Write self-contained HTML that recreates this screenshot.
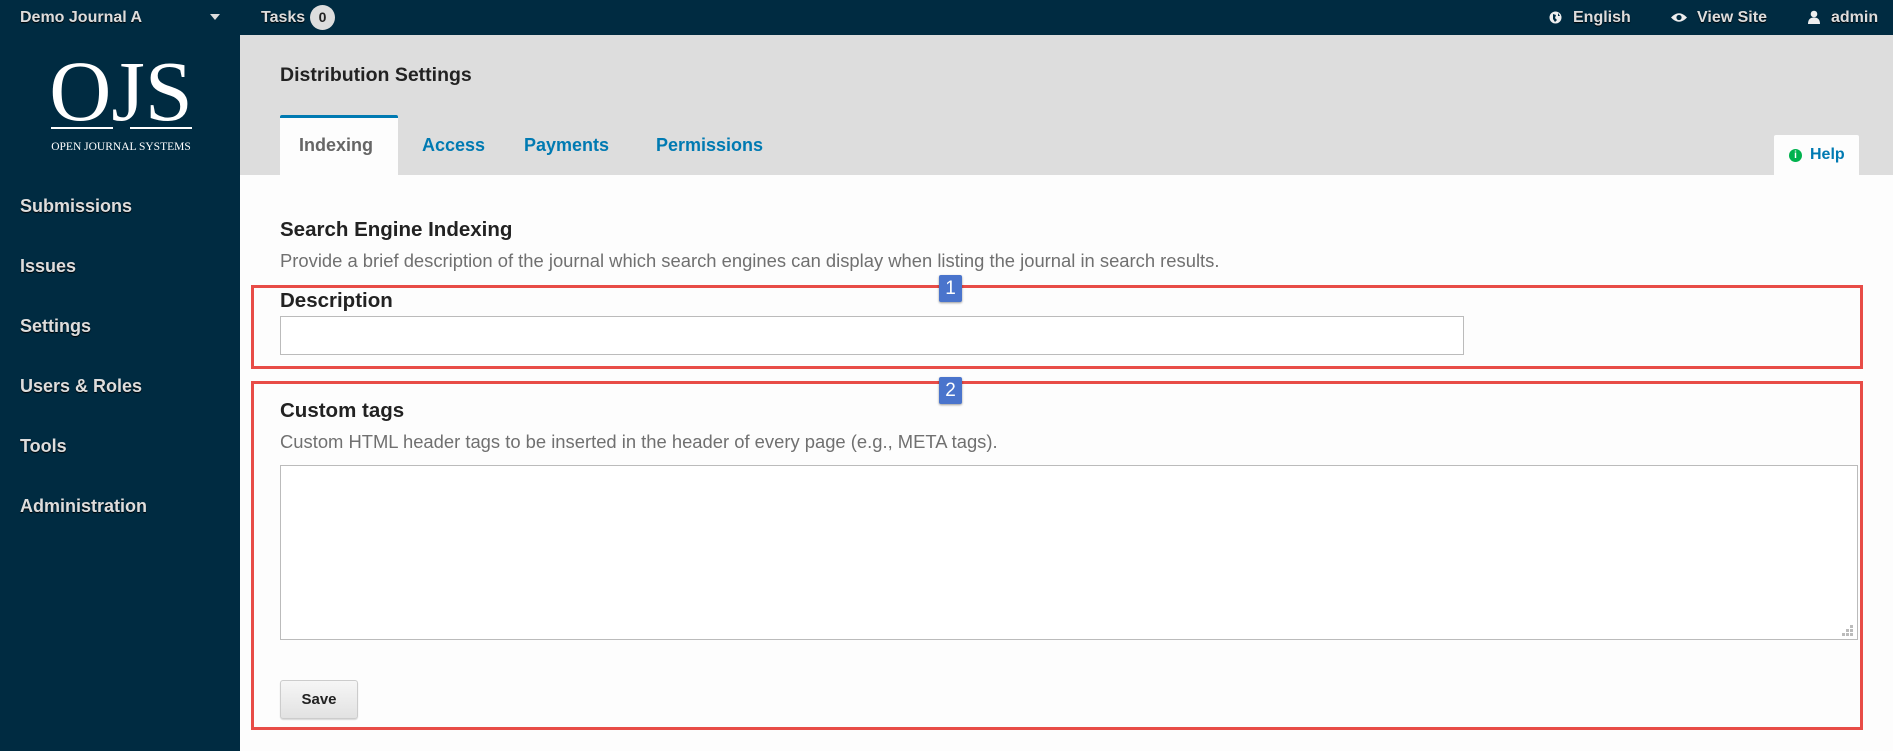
<!DOCTYPE html>
<html><head><meta charset="utf-8"><style>
*{margin:0;padding:0;box-sizing:border-box}
body{width:1893px;height:751px;background:#fdfdfd;font-family:"Liberation Sans",sans-serif;position:relative;overflow:hidden}
.a{position:absolute;white-space:nowrap}
#top{left:0;top:0;width:1893px;height:35px;background:#002b41}
.tb{color:#ddd;font-weight:bold;font-size:16px;text-shadow:0 1px 1px #000;line-height:35px;top:0}
#side{left:0;top:35px;width:240px;height:716px;background:#002b41}
.nav{color:#ddd;font-weight:bold;font-size:18px;text-shadow:0 1px 1px #000;left:20px;line-height:24px}
#hdr{left:240px;top:35px;width:1653px;height:140px;background:#ddd}
.tab{font-weight:bold;font-size:18px;color:#007ab2;line-height:24px;top:133px}
.red{border:3px solid #e84c47}
.badge{background:#4a74cc;color:#fff;font-size:19px;text-align:center;width:23px;height:27px;line-height:27px;border-radius:2px;box-shadow:0 1px 2px rgba(0,0,0,.4)}
h3{font-size:20.5px;color:#222}
.help{font-size:18.4px;color:#707070}
</style></head><body>
<div id="top" class="a"></div>
<div class="a tb" style="left:20px">Demo Journal A</div>
<div class="a" style="left:210px;top:14px;width:0;height:0;border-left:5px solid transparent;border-right:5px solid transparent;border-top:6px solid #ddd"></div>
<div class="a tb" style="left:261px">Tasks</div>
<div class="a" style="left:310px;top:5px;width:25px;height:25px;border-radius:50%;background:#ddd;color:#222;font-weight:bold;font-size:14px;text-align:center;line-height:25px">0</div>
<svg class="a" style="left:1549px;top:11px" width="13" height="13" viewBox="0 0 13 13"><circle cx="6.5" cy="6.5" r="6" fill="#eee"/><path d="M4 3l3 1-1 3 2 2-2 2-2-3zM9 2l2 3-2 0z" fill="#002b41"/></svg>
<div class="a tb" style="left:1573px">English</div>
<svg class="a" style="left:1671px;top:12px" width="16" height="11" viewBox="0 0 16 11"><path d="M0 5.5Q8-3 16 5.5Q8 14 0 5.5z" fill="#eee"/><circle cx="8" cy="5.5" r="2.6" fill="#002b41"/></svg>
<div class="a tb" style="left:1697px">View Site</div>
<svg class="a" style="left:1808px;top:10px" width="12" height="14" viewBox="0 0 12 14"><circle cx="6" cy="4" r="3.3" fill="#eee"/><path d="M0 14Q0 7.5 6 7.5Q12 7.5 12 14z" fill="#eee"/></svg>
<div class="a tb" style="left:1831px">admin</div>

<div id="side" class="a"></div>
<div class="a" style="left:40px;top:48px;width:162px;text-align:center;color:#fff;font-family:'Liberation Serif',serif;font-size:86px;line-height:86px;letter-spacing:0px">OJS</div>
<div class="a" style="left:51px;top:127px;width:62px;height:2px;background:#fff"></div>
<div class="a" style="left:130px;top:127px;width:62px;height:2px;background:#fff"></div>
<div class="a" style="left:46px;top:141px;width:150px;text-align:center;color:#fff;font-family:'Liberation Serif',serif;font-size:11.5px">OPEN JOURNAL SYSTEMS</div>
<div class="a nav" style="top:194px">Submissions</div>
<div class="a nav" style="top:254px">Issues</div>
<div class="a nav" style="top:314px">Settings</div>
<div class="a nav" style="top:374px">Users &amp; Roles</div>
<div class="a nav" style="top:434px">Tools</div>
<div class="a nav" style="top:494px">Administration</div>

<div id="hdr" class="a"></div>
<div class="a" style="left:280px;top:64px;font-size:19.5px;font-weight:bold;color:#222">Distribution Settings</div>
<div class="a" style="left:280px;top:115px;width:118px;height:60px;background:#fdfdfd;border-top:3px solid #007ab2;border-radius:2px 2px 0 0"></div>
<div class="a tab" style="left:299px;color:#666">Indexing</div>
<div class="a tab" style="left:422px">Access</div>
<div class="a tab" style="left:524px">Payments</div>
<div class="a tab" style="left:656px">Permissions</div>
<div class="a" style="left:1774px;top:135px;width:85px;height:40px;background:#fdfdfd;border-radius:2px 2px 0 0"></div>
<div class="a" style="left:1789px;top:149px;width:13px;height:13px;border-radius:50%;background:#00b24e;color:#fff;font-size:10px;font-weight:bold;text-align:center;line-height:13px">i</div>
<div class="a" style="left:1810px;top:146px;font-size:16px;font-weight:bold;color:#007ab2">Help</div>

<h3 class="a" style="left:280px;top:218px">Search Engine Indexing</h3>
<div class="a help" style="left:280px;top:250px">Provide a brief description of the journal which search engines can display when listing the journal in search results.</div>
<div class="a red" style="left:251px;top:285px;width:1612px;height:84px"></div>
<div class="a badge" style="left:939px;top:275px">1</div>
<h3 class="a" style="left:280px;top:289px">Description</h3>
<div class="a" style="left:280px;top:316px;width:1184px;height:39px;border:1px solid #bbb;background:#fff"></div>

<div class="a red" style="left:251px;top:381px;width:1612px;height:349px"></div>
<div class="a badge" style="left:939px;top:377px">2</div>
<h3 class="a" style="left:280px;top:399px">Custom tags</h3>
<div class="a help" style="left:280px;top:431px">Custom HTML header tags to be inserted in the header of every page (e.g., META tags).</div>
<div class="a" style="left:280px;top:465px;width:1578px;height:175px;border:1px solid #bbb;background:#fff"></div>
<svg class="a" style="left:1842px;top:625px" width="12" height="12" viewBox="0 0 12 12" fill="#bbb"><rect x="8" y="0" width="3" height="3"/><rect x="4" y="4" width="3" height="3"/><rect x="8" y="4" width="3" height="3"/><rect x="0" y="8" width="3" height="3"/><rect x="4" y="8" width="3" height="3"/><rect x="8" y="8" width="3" height="3"/></svg>
<div class="a" style="left:280px;top:680px;width:78px;height:39px;border:1px solid #ccc;border-radius:3px;background:linear-gradient(#f6f6f6,#e2e2e2);box-shadow:0 1px 1px rgba(0,0,0,.15);text-align:center;line-height:37px;font-size:15px;font-weight:bold;color:#222">Save</div>
</body></html>
